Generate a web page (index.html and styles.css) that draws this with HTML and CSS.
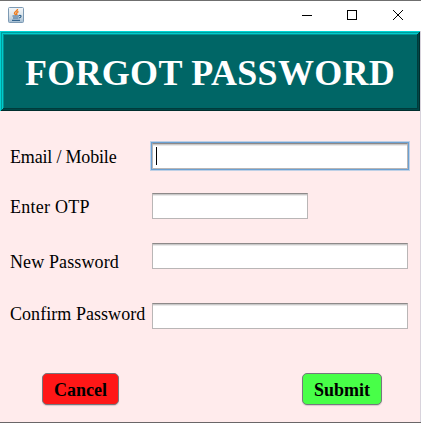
FILE: index.html
```html
<!DOCTYPE html>
<html lang="en">
<head>
<meta charset="utf-8">
<title>Forgot Password</title>
<link rel="stylesheet" href="styles.css">
</head>
<body>
<div class="window">
  <div class="titlebar">
    <svg class="java" width="16" height="16" viewBox="0 0 16 16">
      <defs><linearGradient id="tile" x1="0" y1="0" x2="0" y2="1"><stop offset="0" stop-color="#f4f7f9"/><stop offset=".5" stop-color="#dce5eb"/><stop offset="1" stop-color="#a3bdd2"/></linearGradient></defs>
      <rect x=".5" y=".5" width="15" height="15" rx="1" fill="url(#tile)" stroke="#7d9ab4"/>
      <path d="M9.500 2C10 4 6 4.500 6.500 6.500L8 8M10.500 4.500C8 5.500 8.500 6.500 9 8" fill="none" stroke="#ee7d20" stroke-width="1.5"/>
      <path d="M4.500 9h6.500M5 11h5.500M4 13.400h8M11 8.500c3-.8 2.500 2 0 2.500" fill="none" stroke="#34658f" stroke-width="1.2"/>
    </svg>
    <svg class="controls" width="103" height="12" viewBox="0 0 103 12" shape-rendering="crispEdges">
      <path d="M0 6.500h10" stroke="#000"/>
      <rect x="45.500" y="1.500" width="9" height="9" fill="none" stroke="#000"/>
      <path d="M91 1l10 10M101 1l-10 10" stroke="#000" shape-rendering="auto"/>
    </svg>
  </div>
  <div class="content">
    <h1 class="banner"><span>FORGOT PASSWORD</span></h1>
    <form class="form">
      <div class="row email"><label>Email / Mobile</label><div class="field focused"><i class="caret"></i></div></div>
      <div class="row otp"><label>Enter OTP</label><div class="field short"></div></div>
      <div class="row new"><label>New Password</label><div class="field"></div></div>
      <div class="row confirm"><label>Confirm Password</label><div class="field"></div></div>
      <div class="actions"><button type="button" class="cancel">Cancel</button><button type="button" class="submit">Submit</button></div>
    </form>
  </div>
</div>
</body>
</html>
```
FILE: styles.css
```css
* { box-sizing: border-box; }
body { margin: 0; font-family: "Liberation Serif", serif; color: #000; }
.window { width: 421px; height: 423px; border-top: 1px solid #6f6f6f; border-bottom: 1px solid #6a6668; background: #fff; overflow: hidden; }
.titlebar { height: 30px; display: flex; justify-content: space-between; padding: 6px 16px 0 8px; }
.controls { margin-top: 2px; }
.content { height: 391px; border-right: 1px solid #d8d3dc; background: #ffebec; }
.banner { margin: 0; height: 80px; background: #006666; display: flex; align-items: center; justify-content: center; color: #fff; font-size: 36px; font-weight: bold; line-height: 40px; letter-spacing: .3px; white-space: nowrap;
  box-shadow: inset 1px 1px #00d4d4, inset -1px -1px #002d2d, inset 2px 2px #009c9c, inset -2px -2px #004747, inset 3px 3px #00cccc, inset -3px -3px #003b3b, inset 4px 4px #009292; }
.banner span { padding-top: 4px; }
.form { padding: 32px 12px 0 10px; }
.row { display: flex; align-items: flex-start; height: 50px; font-size: 18px; }
.row label { width: 142px; line-height: 20px; padding-top: 4px; white-space: nowrap; }
.row.email label { letter-spacing: -.18px; }
.row.otp label { letter-spacing: .25px; }
.row.new { height: 60px; }
.row.new label { padding-top: 9px; letter-spacing: .12px; }
.row.confirm { height: 70px; }
.row.confirm label { padding-top: 1px; letter-spacing: .05px; }
.field { width: 256px; height: 26px; border: 1px solid #b9b6b6; border-top-color: #8d8989; background: linear-gradient(#c9c9c9 0 1px, #e9e9e9 1px 2px, #fff 2px); }
.short { width: 156px; }
.focused { box-shadow: 0 0 0 1px #6ba0d2, 0 0 0 2px #bfd0e5; }
.caret { display: block; width: 1px; height: 18px; margin: 3px 0 0 3px; background: #000; }
.actions { display: flex; justify-content: space-between; padding: 0 26px 0 32px; }
button { height: 32px; padding: 2px 0 0; border: 1px solid #77777d; border-radius: 5px; font: bold 18px/28px "Liberation Serif", serif; color: #000; box-shadow: 0 1px 1px #d8c8cd; }
.cancel { width: 77px; background: #ff1717; }
.submit { width: 80px; background: #48ff48; }
```
